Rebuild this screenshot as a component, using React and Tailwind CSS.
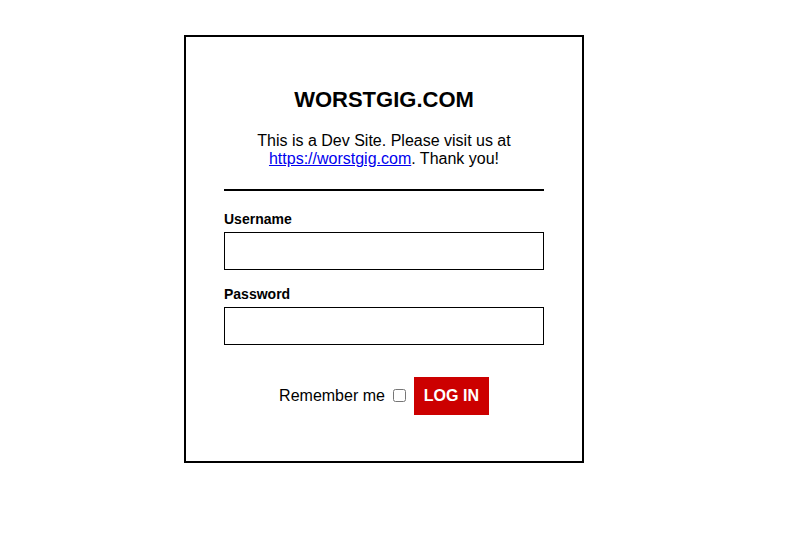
import React, { useState } from "react";

function App() {
  const [username, setUsername] = useState("");
  const [password, setPassword] = useState("");
  const [remember, setRemember] = useState(false);

  return (
    <div className="min-h-[537px] bg-white text-black font-['Liberation_Sans',Arial,sans-serif]">
      <div className="ml-[184px] pt-[35px]">
        <div className="w-[400px] border-2 border-black px-[38px] pt-[50px] pb-[46px]">
          <h1 className="text-center text-[22px] font-bold leading-[25px]">WORSTGIG.COM</h1>
          <p className="mt-[20px] text-center text-[16px] leading-[18.4px]">
            This is a Dev Site. Please visit us at{" "}
            <a href="#" className="text-[#0000ee] underline">https://worstgig.com</a>. Thank you!
          </p>
          <div className="mt-[20px] h-[2px] bg-black" />
          <form onSubmit={(e) => e.preventDefault()}>
            <label className="mt-[20px] block text-[14px] font-bold leading-[16px]">Username</label>
            <input
              type="text"
              value={username}
              onChange={(e) => setUsername(e.target.value)}
              className="mt-[5px] block h-[38px] w-full border border-black px-2 outline-none"
            />
            <label className="mt-[16px] block text-[14px] font-bold leading-[16px]">Password</label>
            <input
              type="password"
              value={password}
              onChange={(e) => setPassword(e.target.value)}
              className="mt-[5px] block h-[38px] w-full border border-black px-2 outline-none"
            />
            <div className="mt-[32px] flex items-center justify-center">
              <span className="text-[16px] leading-[18px]">Remember me</span>
              <input
                type="checkbox"
                checked={remember}
                onChange={(e) => setRemember(e.target.checked)}
                className="ml-[8px] h-[13px] w-[13px]"
              />
              <button
                type="submit"
                className="ml-[8px] h-[38px] w-[75px] bg-[#cc0000] text-[16px] font-bold text-white"
              >
                LOG IN
              </button>
            </div>
          </form>
        </div>
      </div>
    </div>
  );
}

export default App;
